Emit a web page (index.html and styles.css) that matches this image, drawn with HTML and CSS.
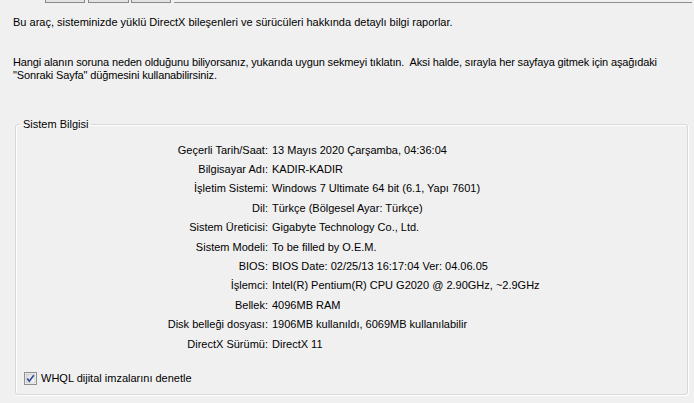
FILE: index.html
```html
<html>
  <head>
    <meta charset="UTF-8" />
    <title>DirectX Tanılama Aracı</title>
    <link rel="stylesheet" href="styles.css">
  </head>
  <body>
    <div class="tabs">
      <span class="tab"></span><span class="tab"></span><span class="tab"></span>
      <span class="rule"></span>
    </div>
    <div class="page">
      <p class="intro">Bu araç, sisteminizde yüklü DirectX bileşenleri ve sürücüleri hakkında detaylı bilgi raporlar.</p>
      <p class="hint">Hangi alanın soruna neden olduğunu biliyorsanız, yukarıda uygun sekmeyi tıklatın.&nbsp; Aksi halde, sırayla her sayfaya gitmek için aşağıdaki<br />"Sonraki Sayfa" düğmesini kullanabilirsiniz.</p>
      <fieldset class="group">
        <legend>Sistem Bilgisi</legend>
        <div class="info">
          <span class="key">Geçerli Tarih/Saat:</span><span>13 Mayıs 2020 Çarşamba, 04:36:04</span>
          <span class="key">Bilgisayar Adı:</span><span>KADIR-KADIR</span>
          <span class="key">İşletim Sistemi:</span><span>Windows 7 Ultimate 64 bit (6.1, Yapı 7601)</span>
          <span class="key">Dil:</span><span>Türkçe (Bölgesel Ayar: Türkçe)</span>
          <span class="key">Sistem Üreticisi:</span><span>Gigabyte Technology Co., Ltd.</span>
          <span class="key">Sistem Modeli:</span><span>To be filled by O.E.M.</span>
          <span class="key">BIOS:</span><span>BIOS Date: 02/25/13 16:17:04 Ver: 04.06.05</span>
          <span class="key">İşlemci:</span><span>Intel(R) Pentium(R) CPU G2020 @ 2.90GHz, ~2.9GHz</span>
          <span class="key">Bellek:</span><span>4096MB RAM</span>
          <span class="key">Disk belleği dosyası:</span><span>1906MB kullanıldı, 6069MB kullanılabilir</span>
          <span class="key">DirectX Sürümü:</span><span>DirectX 11</span>
        </div>
        <label class="check">
          <svg width="13" height="13" viewBox="0 0 13 13">
            <defs>
              <linearGradient id="box" x1="0" y1="0" x2="1" y2="1">
                <stop offset="0" stop-color="#dcdcdc" />
                <stop offset="1" stop-color="#fbfbfb" />
              </linearGradient>
            </defs>
            <rect x="0.5" y="0.5" width="12" height="12" fill="#fff" stroke="#8e8f8f" />
            <rect x="2" y="2" width="9" height="9" fill="url(#box)" stroke="#b0b0b0" stroke-width="0.6" />
            <path d="M3.2 6.4 L5.3 9.2 L9.8 3.2" fill="none" stroke="#2d4f96" stroke-width="1.7" />
          </svg>
          WHQL dijital imzalarını denetle
        </label>
      </fieldset>
    </div>
  </body>
</html>
```

FILE: styles.css
```css
html, body {
  margin: 0; padding: 0;
  width: 694px; height: 403px; overflow: hidden;
}
body {
  background-color: #f0f0f0; color: #000;
  font-family: "Liberation Sans", Arial, sans-serif; font-size: 11px;
}
.tabs {
  display: flex; align-items: flex-end;
  height: 3px; padding-left: 45px; padding-right: 2px;
}
.tabs > .tab {
  width: 38px; height: 2px; margin-right: 3px;
  background-color: #e3e3e3;
  border: #8a8a8a solid 1px; border-top: none;
}
.tabs > .tab:nth-child(2) { width: 39px; margin-right: 2px; }
.tabs > .rule {
  flex: 1; height: 0; border-bottom: #8c8e94 solid 1px;
}
.page { padding-left: 13px; padding-right: 6px; }
.intro { margin: 13px 0 0 0; line-height: 13px; }
.hint { margin: 27px 0 0 0; line-height: 13px; letter-spacing: -0.13px; }
.group {
  margin: 36px 0 0 2px; padding: 0 0 9px 0;
  width: 671px; border: #d8d8d8 solid 1px; border-radius: 3px;
  box-shadow: inset 1px 1px 0 #fff, 1px 1px 0 #fff;
}
.group > legend {
  margin-left: 4px; padding: 0 3px; line-height: 13px;
}
.info {
  display: grid; grid-template-columns: 252px 1fr;
  column-gap: 4px; grid-auto-rows: 19.4px; align-items: center;
  margin-top: 9px;
}
.info > .key { text-align: right; }
.check {
  display: flex; align-items: center; gap: 4px;
  margin: 18px 0 0 8px; height: 14px;
}
```
